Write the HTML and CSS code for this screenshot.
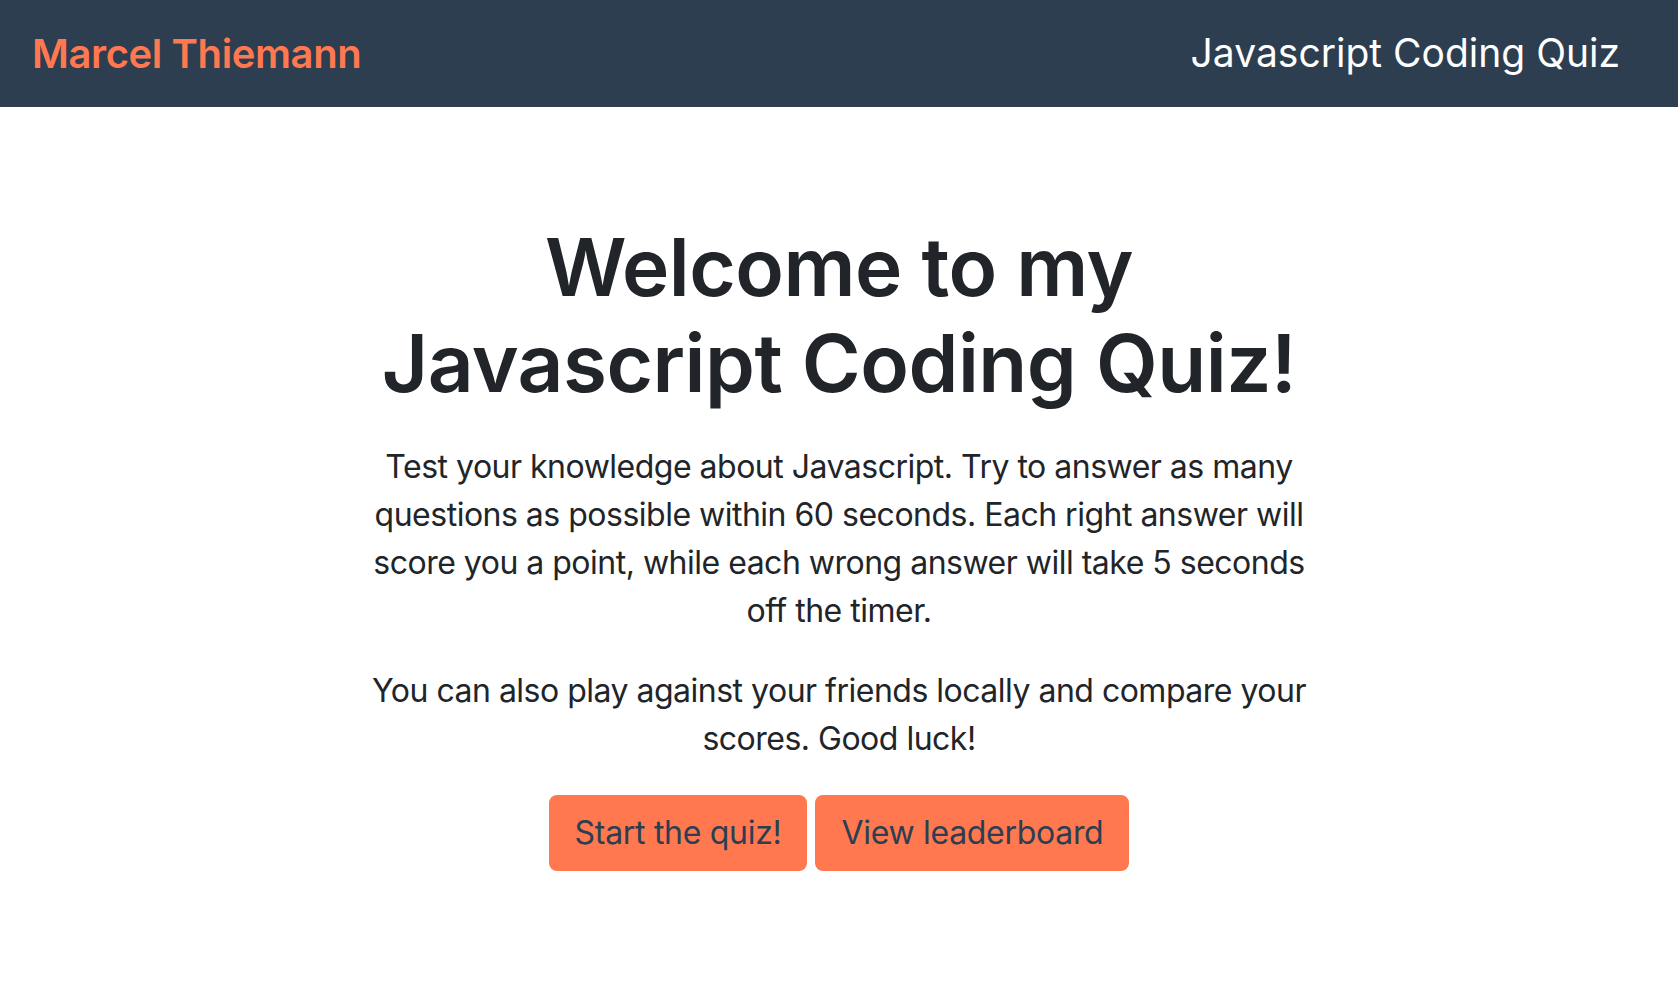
FILE: index.html
```html
<!DOCTYPE html>
<html lang="en">
<head>
<meta charset="utf-8">
<title>Javascript Coding Quiz</title>
<link rel="stylesheet" href="styles.css">
</head>
<body>
<header class="navbar">
  <a class="brand" href="#">Marcel Thiemann</a>
  <span class="nav-title">Javascript Coding Quiz</span>
</header>
<main class="intro">
  <h1 class="intro-title">Welcome to my<br>Javascript Coding Quiz!</h1>
  <p class="intro-text">Test your knowledge about Javascript. Try to answer as many questions as possible within 60 seconds. Each right answer will score you a point, while each wrong answer will take 5 seconds off the timer.</p>
  <p class="intro-text">You can also play against your friends locally and compare your scores. Good luck!</p>
  <div class="actions">
    <button class="btn" type="button">Start the quiz!</button>
    <button class="btn" type="button">View leaderboard</button>
  </div>
</main>
</body>
</html>
```
FILE: styles.css
```css
* { box-sizing: border-box; }
html, body { margin: 0; padding: 0; }
body {
  font-family: Inter, "Noto Sans", sans-serif;
  color: #212529;
  background: #ffffff;
  font-size: 32px;
  line-height: 1.5;
}
.navbar {
  height: 107px;
  background: #2c3e50;
  display: flex;
  align-items: center;
  justify-content: space-between;
  padding: 0 58px 0 32px;
}
.brand {
  color: #ff7850;
  font-size: 40px;
  font-weight: 600;
  letter-spacing: -0.4px;
  text-decoration: none;
  line-height: 1.5;
}
.nav-title {
  color: #ffffff;
  font-size: 39px;
  font-weight: 400;
  line-height: 1.2;
}
.intro {
  display: flex;
  flex-direction: column;
  align-items: center;
  text-align: center;
  padding-top: 112px;
}
.intro-title {
  margin: 0 0 32px;
  font-size: 80px;
  line-height: 1.2;
  font-weight: 600;
  letter-spacing: -0.5px;
}
.intro-text {
  margin: 0 0 32px;
  max-width: 960px;
  letter-spacing: -0.5px;
}
.actions {
  display: flex;
  gap: 8px;
}
.btn {
  font-family: inherit;
  font-size: 32px;
  line-height: 1.5;
  letter-spacing: -0.3px;
  color: #2c3e50;
  background: #ff7850;
  border: 2px solid #ff7850;
  border-radius: 8px;
  padding: 12px 24px;
  cursor: pointer;
}
```
